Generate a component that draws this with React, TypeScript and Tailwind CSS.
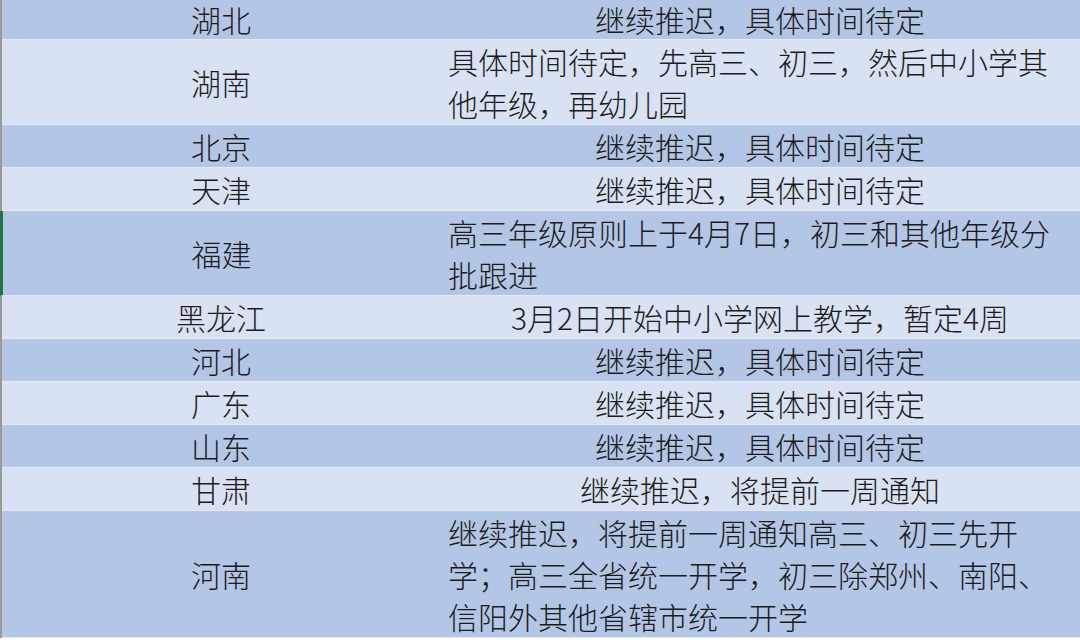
const rows: { province: string; plan: string; lines: number }[] = [
  { province: '湖北', plan: '继续推迟，具体时间待定', lines: 1 },
  { province: '湖南', plan: '具体时间待定，先高三、初三，然后中小学其他年级，再幼儿园', lines: 2 },
  { province: '北京', plan: '继续推迟，具体时间待定', lines: 1 },
  { province: '天津', plan: '继续推迟，具体时间待定', lines: 1 },
  { province: '福建', plan: '高三年级原则上于4月7日，初三和其他年级分批跟进', lines: 2 },
  { province: '黑龙江', plan: '3月2日开始中小学网上教学，暂定4周', lines: 1 },
  { province: '河北', plan: '继续推迟，具体时间待定', lines: 1 },
  { province: '广东', plan: '继续推迟，具体时间待定', lines: 1 },
  { province: '山东', plan: '继续推迟，具体时间待定', lines: 1 },
  { province: '甘肃', plan: '继续推迟，将提前一周通知', lines: 1 },
  {
    province: '河南',
    plan: '继续推迟，将提前一周通知高三、初三先开学；高三全省统一开学，初三除郑州、南阳、信阳外其他省辖市统一开学',
    lines: 3,
  },
];

export default function App() {
  return (
    <div
      className="h-[640px] w-[1080px] overflow-hidden bg-white text-[30px] font-light leading-[42px] text-[#1c1c1c]"
      style={{ fontFamily: '"Noto Sans CJK SC", "Noto Sans", sans-serif' }}
    >
      <div className="flex flex-col border-l-2 border-[#9a9a9a]">
        {rows.map((row, i) => {
          const dark = i % 2 === 0;
          const selected = row.province === '福建';
          // the top row is cut by the screenshot edge
          const first = i === 0;
          return (
            <div
              key={row.province}
              className={`flex border-b border-[#e3e9f5] ${
                dark ? 'bg-[#b4c6e6]' : 'bg-[#d9e2f2]'
              } ${selected ? '-ml-[2px] border-l-[3px] border-l-[#217346]' : ''} ${
                first ? 'leading-[39px]' : ''
              }`}
            >
              <div
                className={`flex shrink-0 items-center justify-center ${
                  selected ? 'w-[437px]' : 'w-[438px]'
                }`}
              >
                {row.province}
              </div>
              <div
                className={`flex-1 px-2 ${
                  row.lines === 1 ? 'text-center' : 'text-left'
                }`}
              >
                {row.plan}
              </div>
            </div>
          );
        })}
      </div>
    </div>
  );
}
